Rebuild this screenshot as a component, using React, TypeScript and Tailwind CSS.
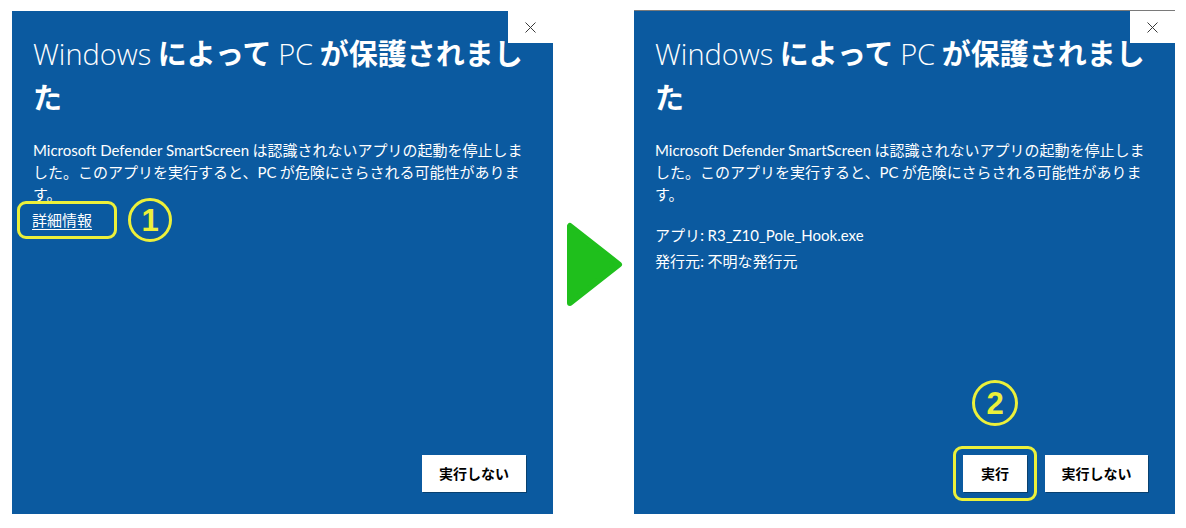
import React from "react"

const jp = "font-['Noto_Sans_CJK_JP',sans-serif]"
const light = "font-['Open_Sans','Noto_Sans_CJK_JP',sans-serif] font-light"
const latin = "font-['Lato','Noto_Sans_CJK_JP',sans-serif]"

function CloseBox() {
  return (
    <div className="absolute top-0 right-0 w-[45px] h-[32px] bg-white flex items-center justify-center">
      <svg width="11" height="11" viewBox="0 0 11 11">
        <path d="M0.5 0.5 L10.5 10.5 M10.5 0.5 L0.5 10.5" stroke="#3a3a3a" strokeWidth="1" />
      </svg>
    </div>
  )
}

function Title() {
  return (
    <h1 className={`text-[29px] leading-[42px] text-white font-bold ${jp}`}>
      <span className={light}>Windows</span> によって <span className={light}>PC</span> が保護されまし
      <br />た
    </h1>
  )
}

function Body() {
  return (
    <div className={`mt-[22px] text-[15px] leading-[22px] text-white whitespace-nowrap ${jp}`}>
      <div>
        <span className={latin}>Microsoft Defender SmartScreen</span> は認識されないアプリの起動を停止しま
      </div>
      <div>
        した。このアプリを実行すると、<span className={latin}>PC</span> が危険にさらされる可能性がありま
      </div>
      <div>す。</div>
    </div>
  )
}

function Mark({ n, size }: { n: string; size: string }) {
  return (
    <div
      className={`${size} rounded-full border-[3px] border-[#ecf03a] flex items-center justify-center text-[#ecf03a] text-[31px] font-bold leading-none font-['Liberation_Sans',sans-serif]`}
    >
      {n}
    </div>
  )
}

function Btn({ label, w }: { label: string; w: string }) {
  return (
    <button
      className={`${w} h-[37px] bg-white text-black text-[14px] font-bold shadow-[1px_1px_0_#08406f] ${jp}`}
    >
      {label}
    </button>
  )
}

export default function App() {
  return (
    <div className="w-[1186px] h-[528px] bg-white flex items-start pl-[12px]">
      {/* left dialog */}
      <div className="relative mt-[11px] w-[541px] h-[503px] bg-[#0b5aa0] flex flex-col pl-[21px] pr-[27px] pt-[20px] pb-[13px]">
        <CloseBox />
        <Title />
        <Body />
        <div className="-ml-[16px] -mt-[7px] flex items-center gap-[11px]">
          <div className="border-[3px] border-[#ecf03a] rounded-[9px] pl-[12px] pr-[22px] pt-[4px] pb-[4px]">
            <span className={`text-[15px] leading-[22px] text-white underline underline-offset-[3px] ${jp}`}>
              詳細情報
            </span>
          </div>
          <Mark n="1" size="w-[44px] h-[44px]" />
        </div>
        <div className="flex-1" />
        <div className="flex justify-end items-end">
          <div className="mb-[9px]">
            <Btn label="実行しない" w="w-[104px]" />
          </div>
        </div>
      </div>

      {/* arrow */}
      <div className="w-[81px] mt-[214px]">
        <svg width="81" height="100" viewBox="0 0 81 100">
          <polygon
            points="17,12 17,89 66,50.5"
            fill="#1fbf1c"
            stroke="#1fbf1c"
            strokeWidth="6"
            strokeLinejoin="round"
          />
        </svg>
      </div>

      {/* right dialog */}
      <div className="relative mt-[10px] w-[541px] h-[504px] border-t border-[#7a7a7a] bg-[#0b5aa0] flex flex-col pl-[21px] pr-[27px] pt-[20px] pb-[13px]">
        <CloseBox />
        <Title />
        <Body />
        <div className={`mt-[19px] flex flex-col gap-[4px] text-[15px] leading-[22px] text-white ${jp}`}>
          <div>
            アプリ: <span className={latin}>R3_Z10_Pole_Hook.exe</span>
          </div>
          <div>発行元: 不明な発行元</div>
        </div>
        <div className="flex-1" />
        <div className="flex justify-end items-end gap-[8px]">
          <div className="flex flex-col items-center gap-[20px]">
            <Mark n="2" size="w-[46px] h-[46px]" />
            <div className="border-[3px] border-[#ecf03a] rounded-[9px] px-[7px] py-[6px]">
              <Btn label="実行" w="w-[64px]" />
            </div>
          </div>
          <div className="mb-[9px]">
            <Btn label="実行しない" w="w-[103px]" />
          </div>
        </div>
      </div>
    </div>
  )
}
